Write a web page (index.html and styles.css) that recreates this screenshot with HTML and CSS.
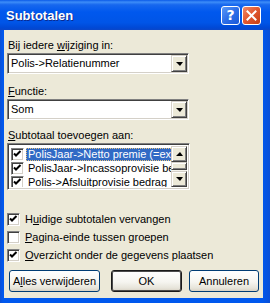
FILE: index.html
```html
<!DOCTYPE html>
<html lang="nl">
<head>
    <meta charset="UTF-8">
    <meta name="viewport" content="width=device-width, initial-scale=1.0">
    <title>Subtotalen</title>
    <link rel="stylesheet" href="styles.css">
</head>
<body>
    <div class="window">
        <div class="titlebar">
            <span class="title">Subtotalen</span>
            <div class="caption-buttons">
                <span class="cap-btn help">?</span>
                <span class="cap-btn close">
                    <svg width="11" height="11" viewBox="0 0 11 11">
                        <path d="M1.5 1.5 L9.5 9.5 M9.5 1.5 L1.5 9.5" stroke="#fff" stroke-width="2" stroke-linecap="square"/>
                    </svg>
                </span>
            </div>
        </div>

        <div class="dialog">
            <!-- group by -->
            <div class="field-label">Bij iedere <u>w</u>ijziging in:</div>
            <div class="combo">
                <span class="combo-text">Polis-&gt;Relatienummer</span>
                <span class="raised combo-btn"><span class="arrow-down"></span></span>
            </div>

            <div class="field-label second"><u>F</u>unctie:</div>
            <div class="combo">
                <span class="combo-text">Som</span>
                <span class="raised combo-btn"><span class="arrow-down"></span></span>
            </div>

            <div class="field-label third"><u>S</u>ubtotaal toevoegen aan:</div>
            <div class="listbox">
                <div class="list-items">
                    <div class="list-row">
                        <span class="check checked"></span>
                        <span class="row-text selected">PolisJaar-&gt;Netto premie (=exclusief kosten)</span>
                    </div>
                    <div class="list-row">
                        <span class="check checked"></span>
                        <span class="row-text">PolisJaar-&gt;Incassoprovisie bedrag</span>
                    </div>
                    <div class="list-row">
                        <span class="check checked"></span>
                        <span class="row-text">Polis-&gt;Afsluitprovisie bedrag</span>
                    </div>
                </div>
                <div class="scrollbar">
                    <span class="raised scroll-btn"><span class="arrow-up"></span></span>
                    <span class="track"><span class="raised thumb"></span></span>
                    <span class="raised scroll-btn"><span class="arrow-down"></span></span>
                </div>
            </div>

            <!-- options -->
            <div class="options">
                <div class="option"><span class="check checked"></span><span>H<u>u</u>idige subtotalen vervangen</span></div>
                <div class="option"><span class="check"></span><span><u>P</u>agina-einde tussen groepen</span></div>
                <div class="option"><span class="check checked"></span><span><u>O</u>verzicht onder de gegevens plaatsen</span></div>
            </div>

            <div class="buttons">
                <span class="button remove">A<u>l</u>les verwijderen</span>
                <span class="button ok">OK</span>
                <span class="button cancel">Annuleren</span>
            </div>
        </div>
    </div>
</body>
</html>
```

FILE: styles.css
```css
body {
    margin: 0;
    font-family: "Liberation Sans", Arial, sans-serif;
    font-size: 11px;
    line-height: 13px;
    color: #000;
    background-color: #0055e5;
}

.window {
    width: 270px;
    height: 303px;
    display: flex;
    flex-direction: column;
    background: linear-gradient(to right, #0a4fd6, #0058ee 3px, #0058ee 262px, #0a4fd6);
}

.titlebar {
    height: 30px;
    flex-shrink: 0;
    display: flex;
    align-items: center;
    padding: 0 9px 0 6px;
    background: linear-gradient(to bottom, #0b5ae8 0%, #3d8df8 7%, #1767ee 16%, #0058ee 40%, #0055e7 75%, #0049d6 92%, #0a46c8 100%);
}

.title {
    flex: 1;
    color: #fff;
    font-size: 13px;
    font-weight: bold;
    padding-top: 1px;
    text-shadow: 1px 1px #0b2a8e;
}

.caption-buttons {
    display: flex;
    gap: 2px;
}

.cap-btn {
    width: 19px;
    height: 19px;
    box-sizing: border-box;
    border: 1px solid #fff;
    border-radius: 3px;
    display: flex;
    align-items: center;
    justify-content: center;
}

.help {
    background: linear-gradient(to bottom right, #5a9af9, #2d6ee8 50%, #1a58d8);
    color: #fff;
    font-size: 14px;
    font-weight: bold;
    font-family: "DejaVu Sans", sans-serif;
}

.close {
    background: linear-gradient(to bottom right, #f08a6a, #e25a33 45%, #c73e12);
}

.dialog {
    flex: 1;
    margin: 0 7px 5px 4px;
    padding: 9px 0 0 3px;
    background-color: #ece9d8;
    display: flex;
    flex-direction: column;
    align-items: flex-start;
}

.field-label {
    margin-left: 1px;
}

.field-label.second {
    margin-top: 11px;
}

.field-label.third {
    margin-top: 9px;
}

/* sunken 3d frame, like the classic controls */
.combo, .listbox, .check {
    box-sizing: border-box;
    border: 1px solid;
    border-color: #808080 #fff #fff #808080;
    box-shadow: inset 1px 1px #404040, inset -1px -1px #d4d0c8;
    background-color: #fff;
}

.raised {
    box-sizing: border-box;
    background-color: #ece9d8;
    border: 1px solid;
    border-color: #d4d0c8 #404040 #404040 #d4d0c8;
    box-shadow: inset 1px 1px #fff, inset -1px -1px #808080;
    display: flex;
    align-items: center;
    justify-content: center;
}

.combo {
    width: 182px;
    height: 21px;
    margin-top: 1px;
    padding: 1px;
    display: flex;
}

.combo-text {
    flex: 1;
    padding: 2px 0 0 2px;
}

.combo-btn {
    width: 16px;
    height: 17px;
}

.arrow-down, .arrow-up {
    width: 0;
    height: 0;
    border-left: 4px solid transparent;
    border-right: 3px solid transparent;
}

.arrow-down {
    border-top: 4px solid #000;
}

.arrow-up {
    border-bottom: 4px solid #000;
}

.listbox {
    width: 183px;
    height: 47px;
    margin-top: 1px;
    padding: 2px;
    display: flex;
}

.list-items {
    flex: 1;
    overflow: hidden;
    padding-top: 1px;
}

.list-row {
    height: 14px;
    display: flex;
    align-items: center;
    white-space: nowrap;
}

.list-row .check {
    margin-left: 1px;
}

.row-text {
    margin-left: 2px;
    padding: 0 2px;
    height: 13px;
}

.row-text.selected {
    background-color: #316ac5;
    color: #fff;
    outline: 1px dotted #e8c27a;
    outline-offset: -1px;
}

.check {
    width: 13px;
    height: 13px;
    flex-shrink: 0;
}

.check.checked {
    background-image: url("data:image/svg+xml,%3Csvg xmlns='http://www.w3.org/2000/svg' width='11' height='11'%3E%3Cpath d='M2 4.5 L4 6.5 L8.5 2' stroke='%23000' stroke-width='2' fill='none'/%3E%3C/svg%3E");
    background-repeat: no-repeat;
    background-position: 0 0;
}

.scrollbar {
    width: 16px;
    display: flex;
    flex-direction: column;
}

.scroll-btn {
    height: 16px;
    flex-shrink: 0;
}

.track {
    flex: 1;
    background-color: #f5f4ee;
    display: flex;
    flex-direction: column;
}

.thumb {
    height: 8px;
}

.options {
    margin-top: 20px;
}

.option {
    height: 18px;
    display: flex;
    align-items: center;
    gap: 5px;
    white-space: nowrap;
}

.option .check {
    background-color: #fff;
}

.buttons {
    margin: 6px 0 0 2px;
    display: flex;
}

.button {
    height: 22px;
    box-sizing: border-box;
    border: 1px solid #003c74;
    border-radius: 3px;
    background: linear-gradient(to bottom, #fff, #f6f5f0 55%, #e7e4da 85%, #d8d2c4);
    display: flex;
    align-items: center;
    justify-content: center;
}

.remove {
    width: 91px;
}

.ok {
    width: 71px;
    margin-left: 11px;
    border-color: #1a1a1a;
    box-shadow: inset 0 0 0 1px #4b4b4b;
}

.cancel {
    width: 70px;
    margin-left: 7px;
}
```
